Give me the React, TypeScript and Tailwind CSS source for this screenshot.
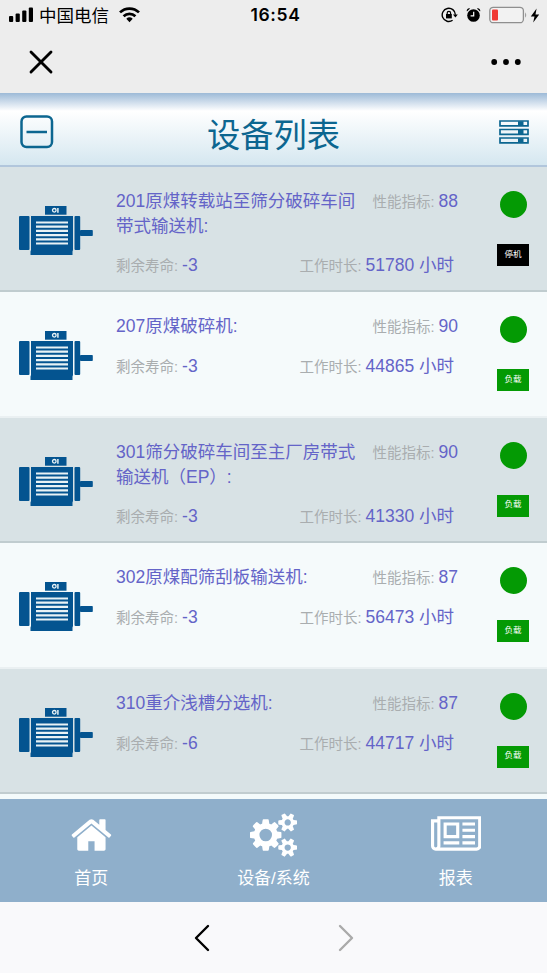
import { ChevronLeft, ChevronRight, X } from "lucide-react";

interface Device {
  name: string[];
  score: number;
  life: number;
  hours: number;
  running: boolean;
}

const devices: Device[] = [
  { name: ["201原煤转载站至筛分破碎车间", "带式输送机:"], score: 88, life: -3, hours: 51780, running: false },
  { name: ["207原煤破碎机:"], score: 90, life: -3, hours: 44865, running: true },
  { name: ["301筛分破碎车间至主厂房带式", "输送机（EP）:"], score: 90, life: -3, hours: 41330, running: true },
  { name: ["302原煤配筛刮板输送机:"], score: 87, life: -3, hours: 56473, running: true },
  { name: ["310重介浅槽分选机:"], score: 87, life: -6, hours: 44717, running: true },
];

const HOME =
  "M1408 992v480q0 26-19 45t-45 19h-384v-384h-256v384h-384q-26 0-45-19t-19-45v-480q0-1 .5-3t.5-3l575-474 575 474q1 2 1 6zm223-69l-62 74q-8 9-21 11h-3q-13 0-21-7l-692-577-692 577q-12 8-24 7-13-2-21-11l-62-74q-8-10-7-23.5t11-21.5l719-599q32-26 76-26t76 26l244 204v-195q0-14 9-23t23-9h192q14 0 23 9t9 23v408l219 182q10 8 11 21.5t-7 23.5z";
const COGS =
  "M896 896q0-106-75-181t-181-75-181 75-75 181 75 181 181 75 181-75 75-181zm768 512q0-52-38-90t-90-38-90 38-38 90q0 53 37.5 90.5t90.5 37.5 90.5-37.5 37.5-90.5zm0-1024q0-52-38-90t-90-38-90 38-38 90q0 53 37.5 90.5t90.5 37.5 90.5-37.5 37.5-90.5zm-384 421v185q0 10-7 19.5t-16 10.5l-155 24q-11 35-32 76 34 48 90 115 7 11 7 20 0 12-7 19-23 30-82.5 89.5t-78.5 59.5q-11 0-21-7l-115-90q-37 19-77 31-11 108-23 155-7 24-30 24h-186q-11 0-20-7.5t-10-17.5l-23-153q-34-10-75-31l-118 89q-7 7-20 7-11 0-21-8-144-133-144-160 0-9 7-19 10-14 41-53t47-61q-23-44-35-82l-152-24q-10-1-17-9.5t-7-19.5v-185q0-10 7-19.5t16-10.5l155-24q11-35 32-76-34-48-90-115-7-11-7-20 0-12 7-20 22-30 82-89t79-59q11 0 21 7l115 90q34-18 77-32 11-108 23-154 7-24 30-24h186q11 0 20 7.5t10 17.5l23 153q34 10 75 31l118-89q8-7 20-7 11 0 21 8 144 133 144 160 0 8-7 19-12 16-42 54t-45 60q23 48 34 82l152 23q10 2 17 10.5t7 19.5zm640 533v140q0 16-149 31-12 27-30 52 51 113 51 138 0 4-4 7-122 71-124 71-8 0-46-47t-52-68q-20 2-30 2t-30-2q-14 21-52 68t-46 47q-2 0-124-71-4-3-4-7 0-25 51-138-18-25-30-52-149-15-149-31v-140q0-16 149-31 13-29 30-52-51-113-51-138 0-4 4-7 4-2 35-20t59-34 30-16q8 0 46 46.5t52 67.5q20-2 30-2t30 2q51-71 92-112l6-2q4 0 124 70 4 3 4 7 0 25-51 138 17 23 30 52 149 15 149 31zm0-1024v140q0 16-149 31-12 27-30 52 51 113 51 138 0 4-4 7-122 71-124 71-8 0-46-47t-52-68q-20 2-30 2t-30-2q-14 21-52 68t-46 47q-2 0-124-71-4-3-4-7 0-25 51-138-18-25-30-52-149-15-149-31v-140q0-16 149-31 13-29 30-52-51-113-51-138 0-4 4-7 4-2 35-20t59-34 30-16q8 0 46 46.5t52 67.5q20-2 30-2t30 2q51-71 92-112l6-2q4 0 124 70 4 3 4 7 0 25-51 138 17 23 30 52 149 15 149 31z";
const NEWSPAPER =
  "M1024 512h-384v384h384v-384zm128 640v128h-640v-128h640zm0-768v640h-640v-640h640zm640 768v128h-512v-128h512zm0-256v128h-512v-128h512zm0-256v128h-512v-128h512zm0-256v128h-512v-128h512zm-1536 960v-960h-128v960q0 26 19 45t45 19 45-19 19-45zm1664 0v-1088h-1536v1088q0 33-11 64h1483q26 0 45-19t19-45zm128-1216v1216q0 80-56 136t-136 56h-1664q-80 0-136-56t-56-136v-1088h256v-128h1792z";

const tabs = [
  { label: "首页", path: HOME, viewBox: "0 0 1664 1792" },
  { label: "设备/系统", path: COGS, viewBox: "0 0 1920 1792" },
  { label: "报表", path: NEWSPAPER, viewBox: "0 0 2048 1792" },
];

function StatusBar() {
  return (
    <div className="grid h-[30px] grid-cols-3 items-center pl-[9px] pr-[7px] text-black">
      <div className="flex items-center">
        <svg width="24" height="16" viewBox="0 0 24 16">
          <rect x="0" y="9" width="4.2" height="6" rx="1" />
          <rect x="6.6" y="6.5" width="4.2" height="8.5" rx="1" />
          <rect x="13.2" y="3.5" width="4.2" height="11.5" rx="1" />
          <rect x="19.8" y="0.5" width="4.2" height="14.5" rx="1" />
        </svg>
        <span className="ml-1.5 pt-[3px] text-[17.5px] leading-none">中国电信</span>
        <svg className="ml-2.5" width="21" height="16" viewBox="0 0 21 16" fill="none" stroke="black" strokeWidth="2.7">
          <path d="M1 5.4a13.6 13.6 0 0 1 19 0" />
          <path d="M4.6 9.2a8.4 8.4 0 0 1 11.8 0" />
          <path d="M10.5 15.2l-3.2-3.4a4.8 4.8 0 0 1 6.4 0z" fill="black" stroke="none" />
        </svg>
      </div>
      <span className="pl-0.5 text-center font-[Inter] text-[17.5px] font-semibold tracking-[0.6px]">16:54</span>
      <div className="flex items-center justify-end">
        <svg width="17" height="16" viewBox="0 0 17 16" fill="none" stroke="black" strokeWidth="1.4">
          <path d="M11.6 13.3a6.6 6.6 0 1 1 2.8-5.6" />
          <path d="M12 7.4h4.8l-2.4 3z" fill="black" stroke="none" />
          <rect x="5" y="7" width="5.8" height="4.4" fill="black" stroke="none" />
          <path d="M6.2 7.4V6a1.7 1.7 0 0 1 3.4 0v1.4" strokeWidth="1.2" />
        </svg>
        <svg className="ml-2" width="15" height="16" viewBox="0 0 15 16">
          <circle cx="7.5" cy="8.5" r="6.3" />
          <path d="M0.9 4.6a2.4 2.4 0 0 1 3.2-3.1zM14.1 4.6a2.4 2.4 0 0 0-3.2-3.1z" />
          <path d="M7.7 4.8v4H4.6" fill="none" stroke="white" strokeWidth="1.2" />
        </svg>
        <svg className="ml-2" width="39" height="18" viewBox="0 0 39 18">
          <rect x="0.8" y="1.3" width="33.6" height="15.4" rx="3.5" fill="#f2f2f2" stroke="#8f8f8f" strokeWidth="1.3" />
          <rect x="3" y="3.5" width="6" height="11" rx="1" fill="#f03a34" />
          <path d="M36.2 6.2q2 2.8 0 5.6z" fill="#8f8f8f" />
        </svg>
        <svg className="ml-0.5" width="10" height="15" viewBox="0 0 10 15">
          <path d="M6.6 0.5L0.8 8.4h3.7L3.2 14.4 9.2 6.4H5.5z" />
        </svg>
      </div>
    </div>
  );
}

function MotorIcon() {
  return (
    <svg width="75" height="51" viewBox="0 0 75 51" fill="#045490">
      <rect x="26" y="1" width="21.5" height="8.7" />
      <rect x="0" y="11" width="10.5" height="34" rx="1" />
      <path d="M12 11h42v34l-0.5 1.5V50H11.500v-3.500L12 45z" />
      <rect x="55.500" y="11" width="5.700" height="34" rx="1" />
      <rect x="61" y="25" width="12.800" height="6" rx="0.8" />
      <path d="M17 17.500h32M17 21.700h32M17 25.900h32M17 30.100h32M17 34.300h32M17 38.500h32" stroke="#e8f2f5" strokeWidth="2.200" />
      <circle cx="35.300" cy="5.300" r="1.800" fill="none" stroke="#e8f2f5" strokeWidth="1.300" />
      <path d="M38.900 2.900v4.800" stroke="#e8f2f5" strokeWidth="1.500" />
    </svg>
  );
}

function Metric({ label, value }: { label: string; value: string | number }) {
  return (
    <span className="whitespace-nowrap text-[14.5px] text-[#a9adaf]">
      {label}: <span className="text-[17.5px] text-[#6464c8]">{value}</span>
    </span>
  );
}

function DeviceRow({ device }: { device: Device }) {
  return (
    <div className="flex h-[125.4px] shrink-0 border-b-2 border-[#eaf0f2] bg-[#f5fafb] pl-[19px] pr-[18px] odd:border-[#c0cccf] odd:bg-[#d8e2e5]">
      <div className="w-[97px] pt-[38px]">
        <MotorIcon />
      </div>
      <div className="w-[342px]">
        <div className="flex justify-between pt-[22px]">
          <div className="whitespace-nowrap text-[17.500px] leading-[25px] text-[#6464c8]">
            {device.name.map((line) => (
              <div key={line}>{line}</div>
            ))}
          </div>
          <div className="leading-[25px]">
            <Metric label="性能指标" value={device.score} />
          </div>
        </div>
        <div className="mt-[14px] flex justify-between pr-1 leading-[25px]">
          <Metric label="剩余寿命" value={device.life} />
          <Metric label="工作时长" value={`${device.hours} 小时`} />
        </div>
      </div>
      <div className="flex flex-1 flex-col items-end pt-6">
        <div className="mr-[2px] size-[27px] rounded-full bg-[#049a04]" />
        {device.running ? (
          <div className="mt-[26px] flex h-[22px] w-8 items-center justify-center bg-[#049a04] pb-0.5 text-[8.5px] text-white">负载</div>
        ) : (
          <div className="mt-[26px] flex h-[22px] w-8 items-center justify-center bg-black pb-0.5 text-[8.5px] text-white">停机</div>
        )}
      </div>
    </div>
  );
}

export default function App() {
  return (
    <div className="flex h-[973px] w-[547px] flex-col overflow-hidden bg-[#ededed] font-['Liberation_Sans','Noto_Sans_CJK_SC',sans-serif]">
      <StatusBar />
      <div className="flex h-[63px] items-center justify-between pl-[21px] pr-[26px]">
        <X size={40} strokeWidth={1.700} />
        <svg width="30" height="8" viewBox="0 0 30 8">
          <circle cx="3.200" cy="4" r="2.900" />
          <circle cx="15" cy="4" r="2.900" />
          <circle cx="26.800" cy="4" r="2.900" />
        </svg>
      </div>

      <header className="flex h-[74px] shrink-0 items-center justify-between border-b-2 border-[#b1c6dc] bg-linear-to-b from-[#9dbad7] via-white via-25% to-[#d5e7f0] pl-5 pr-[18px] pt-1.5 text-[#0c6690]">
        <svg width="34" height="34" viewBox="0 0 34 34" fill="none" stroke="currentColor" strokeWidth="2.500">
          <rect x="1.500" y="1.500" width="30.500" height="30.500" rx="5" />
          <path d="M6.500 17h20.500" />
        </svg>
        <h1 className="pr-1.5 pt-[7px] text-[33.300px]">设备列表</h1>
        <svg width="30" height="24" viewBox="0 0 30 24" fill="none" stroke="currentColor" strokeWidth="1.700">
          <path d="M1 1h28v4.800H1zM1 9.500h28v4.800H1zM1 18h28v4.800H1z" />
          <path d="M19 3.400h5.500M19 11.900h5.500M19 20.400h5.500" strokeWidth="4.500" />
        </svg>
      </header>

      <main className="flex h-[632px] shrink-0 flex-col bg-[#f3fafb]">
        {devices.map((device) => (
          <DeviceRow key={device.name[0]} device={device} />
        ))}
      </main>

      <nav className="grid h-[103px] shrink-0 grid-cols-3 bg-[#8fafcb] text-white">
        {tabs.map((tab) => (
          <div key={tab.label} className="flex flex-col items-center pt-3.5">
            <svg className="h-11" viewBox={tab.viewBox} fill="currentColor">
              <path d={tab.path} />
            </svg>
            <span className="mt-2.5 text-[17px] leading-6">{tab.label}</span>
          </div>
        ))}
      </nav>

      <div className="flex flex-1 items-center justify-center gap-[96px] bg-[#f9f9fb]">
        <ChevronLeft size={48} strokeWidth={1.200} />
        <ChevronRight size={48} strokeWidth={1.200} className="text-[#aaaaaa]" />
      </div>
    </div>
  );
}
